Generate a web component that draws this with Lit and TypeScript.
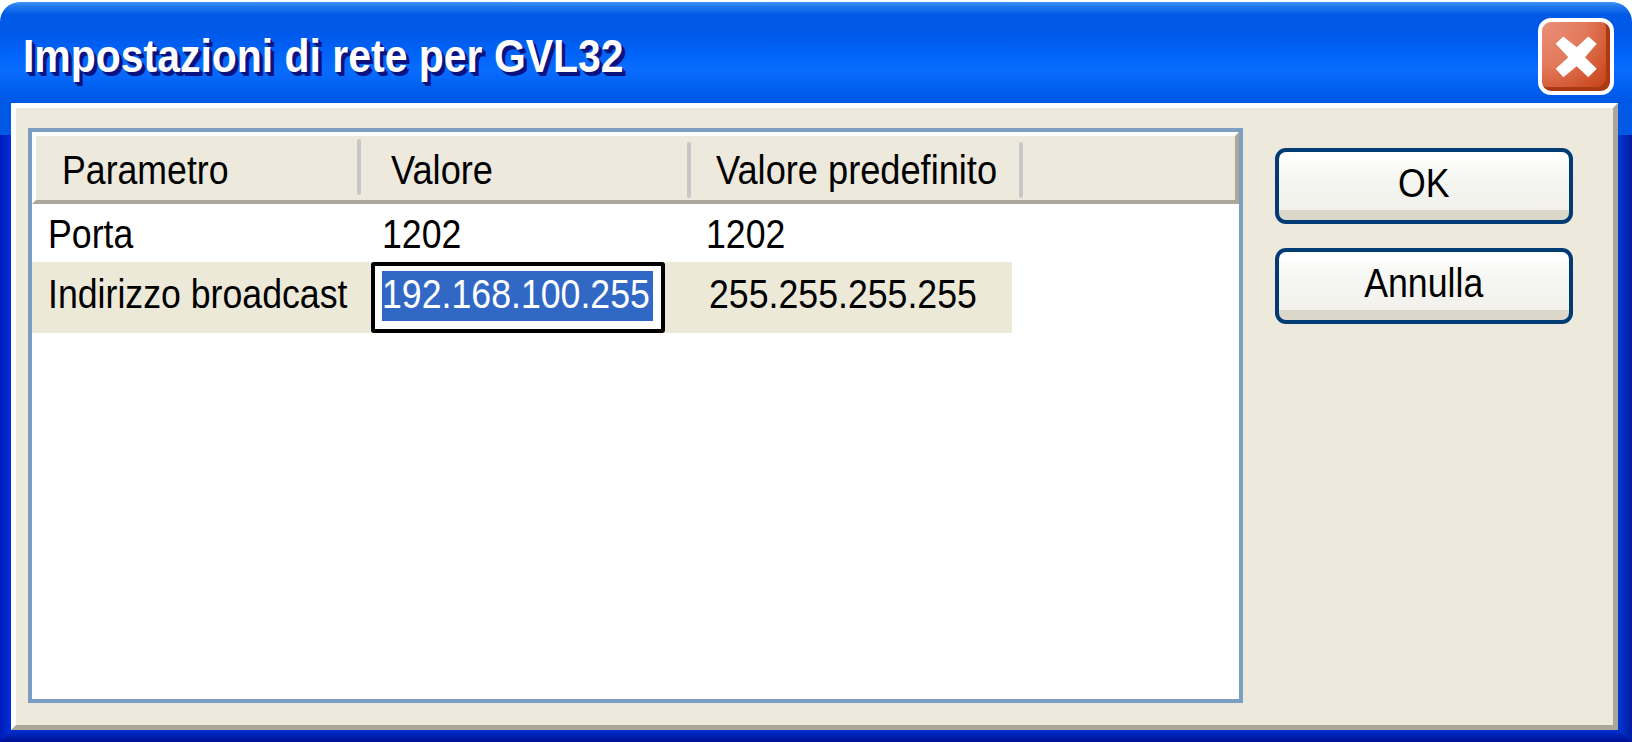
import { LitElement, html, css } from "lit";
import { customElement } from "lit/decorators.js";

@customElement("app-root")
export class AppRoot extends LitElement {
  static styles = css`
    :host { display: block; width: 1632px; height: 742px; background: #fff; overflow: hidden;
      font-family: "Liberation Sans", Arial, sans-serif; color: #000; }
    .window { width: 1632px; height: 740px; margin-top: 2px; border-radius: 20px 20px 0 0; overflow: hidden;
      display: flex; flex-direction: column;
      background:
        linear-gradient(180deg, #3f93f5 0px, #1f75ee 5px, #0058e6 13px, #0058e8 30px, #0063f8 50px, #0a6cff 68px, #0060f0 85px, #0058e6 100px, #0058e4 133px) top / 100% 133px no-repeat,
        linear-gradient(90deg, #001ab8 0px, #0030dc 11px) left / 11px 100% no-repeat,
        linear-gradient(90deg, #0038d8 0px, #001c9c 14px) right / 14px 100% no-repeat,
        #0030d0; }
    .titlebar { height: 101px; flex: none; display: flex; align-items: flex-start; justify-content: space-between; padding: 0 18px 0 23px; box-sizing: border-box; }
    .title { font-size: 46px; font-weight: 700; color: #fff; text-shadow: 2px 2px 0 #0a1480, 4px 4px 0 #0a1480; white-space: nowrap;
      transform: scaleX(0.89); transform-origin: left center; display: inline-block; margin-top: 27px; }
    .close { width: 76px; height: 77px; box-sizing: border-box; border: 4px solid #fff; border-radius: 13px; margin-top: 16px; overflow: hidden; flex: none;
      background: radial-gradient(circle at 0% 0%, #ea9078 0%, #e27a5c 45%, #cf5028 80%, #c03c14 100%);
      box-shadow: inset -4px -4px 0 #a83a14; }
    .close svg { display: block; width: 100%; height: 100%; }
    .body { flex: none; width: 1607px; height: 627px; margin-left: 11px; box-sizing: border-box;
      border-top: 5px solid #fff; border-left: 5px solid #fff; border-right: 5px solid #aca899; border-bottom: 5px solid #aca899;
      background: #ede9dd; display: flex; padding: 20px 0 0 12px; gap: 32px; }
    .bottom { flex: 1; background: linear-gradient(180deg, #0030d0, #001090); clip-path: polygon(11px 0, calc(100% - 14px) 0, 100% 100%, 0 100%); }
    .frame { width: 1215px; height: 575px; box-sizing: border-box; border: 4.5px solid #7a9fc2; background: #fff; display: flex; flex-direction: column; flex: none; }
    .head { height: 72px; flex: none; box-sizing: border-box; background: #ede9dd; border-top: 4px solid #fff; border-left: 4px solid #fff; border-right: 4px solid #aca899; border-bottom: 4px solid #aca899;
      display: flex; font-size: 40px; }
    .hc { display: flex; align-items: center; flex: none; box-sizing: border-box; padding-top: 4px; }
    .h1 { width: 321px; padding-left: 26px; }
    .h2 { width: 326px; padding-left: 30px; }
    .h3 { width: 328px; padding-left: 25px; }
    .sep { width: 4px; height: 56px; background: #c6c7c6; border-radius: 2px; align-self: center; flex: none; margin-top: 3px; }
    .sep.first { margin-top: 0; margin-bottom: 3px; }
    .t { display: inline-block; white-space: nowrap; transform: scaleX(0.892); transform-origin: left center; }
    .t.wide { transform: scaleX(0.905); }
    .row { display: flex; align-items: center; font-size: 40px; flex: none; }
    .r1 { height: 58px; padding-top: 3px; box-sizing: border-box; }
    .r2 { height: 71px; width: 980px; background: #ece9d8; }
    .c1 { width: 339px; flex: none; padding-left: 16px; box-sizing: border-box; }
    .r2 .c1, .r2 .c3b { padding-bottom: 6px; }
    .c2 { width: 335px; flex: none; padding-left: 11px; box-sizing: border-box; }
    .focus { width: 294px; height: 71px; box-sizing: border-box; flex: none; border: 4px solid #000; border-radius: 3px; background: #fff; padding: 5px 8px 8px 7px; }
    .sel { height: 50px; background: #3168c6; color: #fff; display: flex; align-items: center; padding: 0 0 4px 0; box-sizing: border-box; }
    .c3b { padding-left: 44px; }
    .side { display: flex; flex-direction: column; gap: 24px; margin-top: 19.5px; }
    .btn { width: 298px; height: 76px; box-sizing: border-box; border: 4px solid #003c74; border-radius: 11px; display: flex; align-items: center; justify-content: center;
      font-size: 40px; padding-bottom: 4px;
      background: linear-gradient(180deg, #fff 0, #fff 8px, #fbfbf9 10px, #f5f5f1 30px, #f2f1ec 58px, #dcd7cb 58px, #dcd7cb 68px); }
    .btn .t { transform-origin: center center; }
  `;
  render() {
    return html`
      <div class="window">
        <div class="titlebar">
          <span class="title">Impostazioni di rete per GVL32</span>
          <div class="close">
            <svg viewBox="0 0 68 69"><path d="M13.7 21.8 L21.3 14.5 L34.7 25.2 L46.3 14.5 L54.7 21.8 L43 35.2 L54.7 46.8 L46.3 55.2 L34.7 44.2 L21.3 55.2 L13.7 46.8 L26.3 35.2 Z" fill="#fff"/></svg>
          </div>
        </div>
        <div class="body">
          <div class="frame">
            <div class="head">
              <div class="hc h1"><span class="t">Parametro</span></div>
              <div class="sep first"></div>
              <div class="hc h2"><span class="t wide">Valore</span></div>
              <div class="sep"></div>
              <div class="hc h3"><span class="t wide">Valore predefinito</span></div>
              <div class="sep"></div>
            </div>
            <div class="row r1">
              <div class="c1"><span class="t">Porta</span></div>
              <div class="c2"><span class="t">1202</span></div>
              <div><span class="t">1202</span></div>
            </div>
            <div class="row r2">
              <div class="c1"><span class="t">Indirizzo broadcast</span></div>
              <div class="focus"><div class="sel"><span class="t">192.168.100.255</span></div></div>
              <div class="c3b"><span class="t">255.255.255.255</span></div>
            </div>
          </div>
          <div class="side">
            <div class="btn"><span class="t">OK</span></div>
            <div class="btn"><span class="t">Annulla</span></div>
          </div>
        </div>
        <div class="bottom"></div>
      </div>
    `;
  }
}
